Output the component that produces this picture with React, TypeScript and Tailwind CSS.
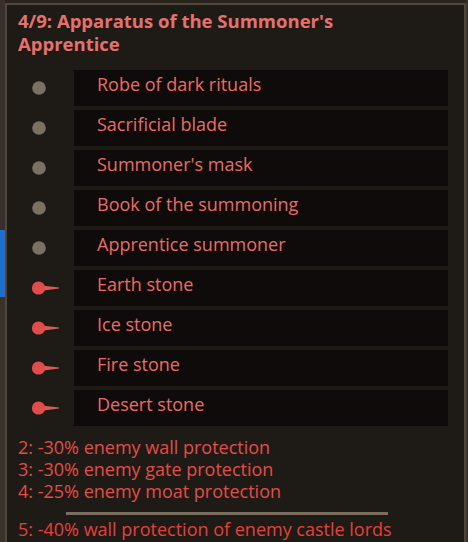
import React from "react";

const items: { name: string; active: boolean }[] = [
  { name: "Robe of dark rituals", active: false },
  { name: "Sacrificial blade", active: false },
  { name: "Summoner's mask", active: false },
  { name: "Book of the summoning", active: false },
  { name: "Apprentice summoner", active: false },
  { name: "Earth stone", active: true },
  { name: "Ice stone", active: true },
  { name: "Fire stone", active: true },
  { name: "Desert stone", active: true },
];

function Dot({ active }: { active: boolean }) {
  if (!active) {
    return (
      <svg width="60" height="20" viewBox="0 0 60 20">
        <circle cx="32" cy="10" r="6.8" fill="#7a7163" />
      </svg>
    );
  }
  return (
    <svg width="60" height="20" viewBox="0 0 60 20">
      <path d="M37 7.8 L52 9.6 L52 10.6 L37 12.4 Z" fill="#d65a55" />
      <circle cx="31.5" cy="10" r="6.6" fill="#e24d4b" />
    </svg>
  );
}

export default function App() {
  return (
    <div
      className="w-[468px] h-[542px] overflow-hidden bg-[#2a241d] flex"
      style={{ fontFamily: '"Open Sans", "Noto Sans", sans-serif' }}
    >
      <div className="w-[5px] shrink-0 flex flex-col bg-[#2b2620]">
        <div className="h-[230px] bg-[#3a2e2c]" />
        <div className="h-[67px] bg-[#1f6fd0]" />
        <div className="flex-1 bg-[#3a3229]" />
      </div>
      <div className="w-[461px] shrink-0 mt-[3px] border-2 border-b-0 border-[#4f473b] bg-[#1e1b17] flex flex-col">
        <div className="pl-[11px] pt-[4px] text-[18.5px] leading-[23px] font-bold text-[#e8706c]">
          4/9: Apparatus of the Summoner's
          <br />
          Apprentice
        </div>
        <div className="mt-[15px] flex flex-col gap-[4px]">
          {items.map((it) => (
            <div key={it.name} className="flex items-center h-[36px]">
              <div className="w-[67px] shrink-0 flex items-center">
                <Dot active={it.active} />
              </div>
              <div className="w-[374px] h-full bg-[#0e0b0a] flex items-center pl-[23px] pb-[8px] text-[18px] text-[#ea6b69]">
                {it.name}
              </div>
            </div>
          ))}
        </div>
        <div className="pl-[11px] mt-[10px] text-[18px] leading-[22px] text-[#e24d48]">
          <div>2: -30% enemy wall protection</div>
          <div>3: -30% enemy gate protection</div>
          <div>4: -25% enemy moat protection</div>
        </div>
        <div className="ml-[59px] mt-[10px] w-[322px] h-[3px] bg-[#7a6e5e]" />
        <div className="pl-[11px] mt-[3px] text-[18px] leading-[22px] text-[#e4403c]">
          5: -40% wall protection of enemy castle lords
        </div>
      </div>
      <div className="flex-1 bg-[#3a342b]" />
    </div>
  );
}
